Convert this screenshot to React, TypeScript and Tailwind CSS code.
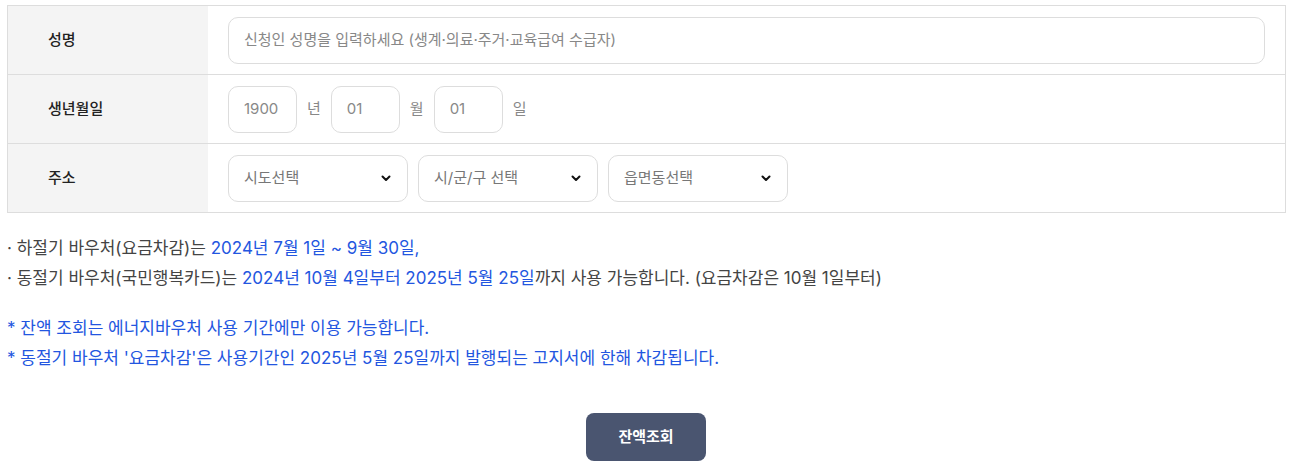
import React from "react";

const font = { fontFamily: 'Inter, "Noto Sans CJK KR", "Noto Sans", sans-serif' };

function Chevron() {
  return (
    <svg width="12" height="12" viewBox="0 0 12 12" className="shrink-0">
      <path d="M2.5 4.5 L6 8 L9.5 4.5" fill="none" stroke="#111" strokeWidth="2" strokeLinecap="round" strokeLinejoin="round" />
    </svg>
  );
}

function Select({ label }: { label: string }) {
  return (
    <div className="w-[180px] h-[47px] border border-[#dddddd] rounded-[10px] flex items-center justify-between pl-[15px] pr-[15px] text-[15px] text-[#777]">
      <span>{label}</span>
      <Chevron />
    </div>
  );
}

function Small({ v }: { v: string }) {
  return (
    <div className="w-[69px] h-[47px] border border-[#dddddd] rounded-[10px] flex items-center pl-[15px] text-[15px] text-[#888]">
      {v}
    </div>
  );
}

function Row({ label, children, last }: { label: string; children: React.ReactNode; last?: boolean }) {
  return (
    <div className={`flex ${last ? "h-[68px]" : "h-[69px] border-b border-[#dddddd]"}`}>
      <div className="w-[200px] bg-[#f4f4f4] flex items-center pl-[40px] text-[15px] font-medium text-[#222]">{label}</div>
      <div className="flex-1 flex items-center pl-[20px] pr-[20px] gap-[10px]">{children}</div>
    </div>
  );
}

export default function App() {
  const B = "text-[#2356e0]";
  return (
    <div className="bg-white w-[1292px] h-[471px]" style={font}>
      <div className="pt-[5px] px-[7px] pr-[6px]">
        <div className="border border-[#dddddd]">
          <Row label="성명">
            <div className="flex-1 h-[47px] border border-[#dddddd] rounded-[10px] flex items-center pl-[15px] text-[15px] text-[#888]">
              신청인 성명을 입력하세요 (생계·의료·주거·교육급여 수급자)
            </div>
          </Row>
          <Row label="생년월일">
            <Small v="1900" />
            <span className="text-[15px] text-[#888]">년</span>
            <Small v="01" />
            <span className="text-[15px] text-[#888]">월</span>
            <Small v="01" />
            <span className="text-[15px] text-[#888]">일</span>
          </Row>
          <Row label="주소" last>
            <Select label="시도선택" />
            <Select label="시/군/구 선택" />
            <Select label="읍면동선택" />
          </Row>
        </div>
      </div>
      <div className="pl-[7px] pt-[20px] text-[17px] leading-[30px] text-[#444]">
        <div>
          · 하절기 바우처(요금차감)는 <span className={B}>2024년 7월 1일 ~ 9월 30일,</span>
        </div>
        <div>
          · 동절기 바우처(국민행복카드)는 <span className={B}>2024년 10월 4일부터 2025년 5월 25일</span>까지 사용 가능합니다. (요금차감은 10월 1일부터)
        </div>
        <div className={`mt-[20px] ${B}`}>* 잔액 조회는 에너지바우처 사용 기간에만 이용 가능합니다.</div>
        <div className={B}>* 동절기 바우처 '요금차감'은 사용기간인 2025년 5월 25일까지 발행되는 고지서에 한해 차감됩니다.</div>
      </div>
      <div className="flex justify-center pt-[40px]">
        <button className="w-[120px] h-[48px] rounded-[8px] bg-[#4a5570] text-white text-[15px] font-bold">잔액조회</button>
      </div>
    </div>
  );
}
